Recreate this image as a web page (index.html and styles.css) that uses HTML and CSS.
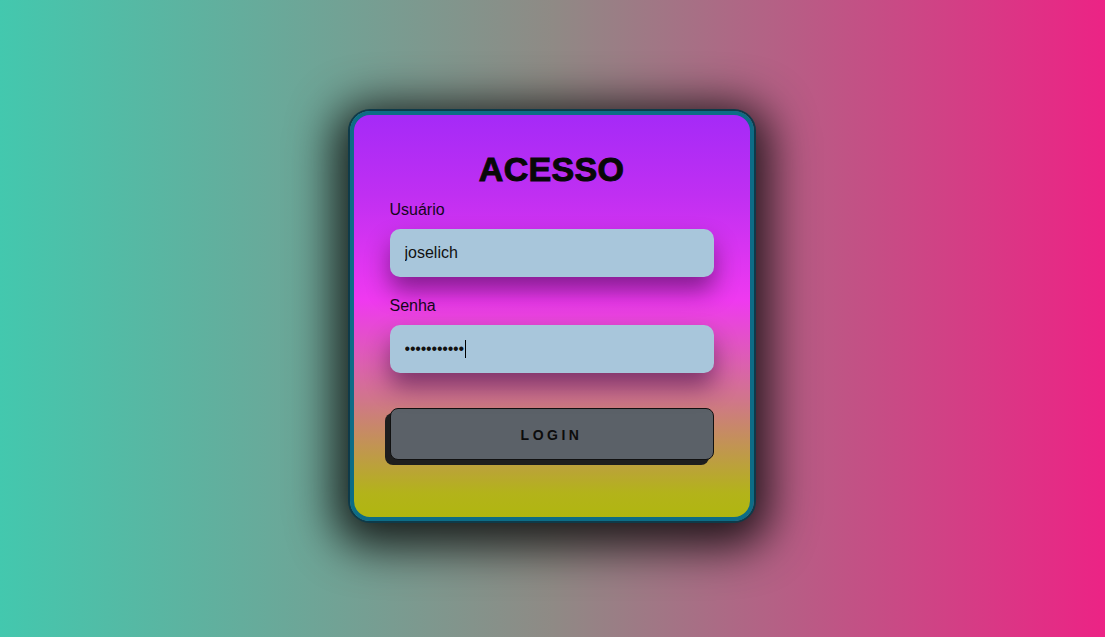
FILE: index.html
```html
<!DOCTYPE html>
<html lang="pt-BR">
<head>
<meta charset="utf-8">
<title>Acesso</title>
<link rel="stylesheet" href="styles.css">
</head>
<body>
  <main class="card">
    <h1 class="title">ACESSO</h1>
    <form class="form">
      <label class="label" for="user">Usuário</label>
      <input class="field" id="user" type="text" value="joselich">
      <label class="label label-second" for="pass">Senha</label>
      <div class="field-wrap">
        <input class="field" id="pass" type="password" value="joselich123">
        <span class="caret"></span>
      </div>
      <button class="btn" type="button">LOGIN</button>
    </form>
  </main>
</body>
</html>
```

FILE: styles.css
```css
* { box-sizing: border-box; }

html, body {
  margin: 0;
  height: 100%;
}

body {
  display: flex;
  align-items: center;
  justify-content: center;
  background: linear-gradient(to right, #43c8ae 0%, #8f8a85 50%, #ec2385 100%);
  font-family: "Liberation Sans", Arial, sans-serif;
}

.card {
  width: 404px;
  height: 410px;
  margin: -5px 2px 0 0;
  border: 4px solid #0d6c86;
  border-radius: 20px;
  padding: 34px 36px 0 36px;
  background: linear-gradient(to bottom, #a52af7 0%, #c02ff2 20%, #ef39f0 46%, #d0768a 71%, #b3b31a 94%, #b0b610 100%);
  box-shadow: 0 0 0 2px #0e3a49, 0 10px 45px 16px rgba(0, 0, 0, 0.8);
}

.title {
  margin: 0 0 12px 0;
  font-size: 34px;
  line-height: 40px;
  font-weight: 900;
  text-align: center;
  color: #080808;
  -webkit-text-stroke: 1px #080808;
  letter-spacing: 0.3px;
}

.form {
  display: flex;
  flex-direction: column;
}

.label {
  font-size: 16px;
  line-height: 18px;
  color: #14061a;
  margin-bottom: 9.5px;
}

.label-second {
  margin-top: 20.5px;
}

.field-wrap {
  position: relative;
}

.field {
  display: block;
  width: 100%;
  height: 48px;
  border: none;
  outline: none;
  border-radius: 10px;
  background: #a8c6db;
  padding: 0 15px;
  font-family: "Liberation Sans", Arial, sans-serif;
  font-size: 16px;
  color: #111;
  box-shadow: 0 14px 24px rgba(30, 0, 40, 0.48);
}

#pass {
  letter-spacing: -0.2px;
}

.caret {
  position: absolute;
  left: 75px;
  top: 15px;
  width: 1px;
  height: 18px;
  background: #000;
}

.btn {
  margin-top: 35px;
  height: 52px;
  width: 100%;
  border: 1px solid #111;
  border-radius: 8px;
  background: #5b6168;
  box-shadow: -5px 5px 0 #1e1e1e;
  padding: 2px 0 0 0;
  font-family: "Liberation Sans", Arial, sans-serif;
  font-weight: 700;
  font-size: 14px;
  letter-spacing: 3.5px;
  color: #0c0c0c;
  cursor: pointer;
}
```
